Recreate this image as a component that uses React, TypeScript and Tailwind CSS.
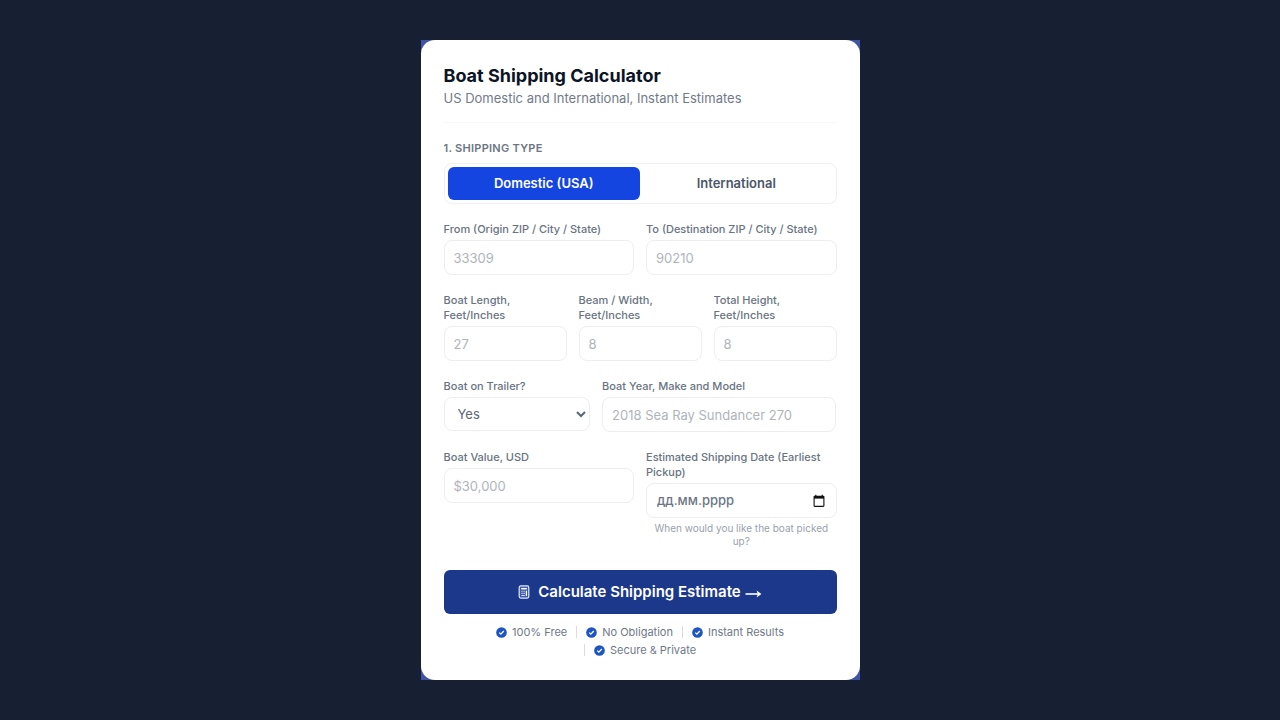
import { useState, type ReactNode } from 'react'

type ShippingType = 'domestic' | 'international'

const TYPES: { id: ShippingType; label: string }[] = [
  { id: 'domestic', label: 'Domestic (USA)' },
  { id: 'international', label: 'International' },
]

const PERKS = ['100% Free', 'No Obligation', 'Instant Results', 'Secure & Private']

const inputClass =
  'block h-[35px] w-full rounded-lg border border-[#eceef0] bg-white px-[9px] text-[13px] text-[#5b6675] outline-none placeholder:text-[#b0b4ba] focus:border-blue-400'

function Field({ id, label, children }: { id: string; label: string; children: ReactNode }) {
  return (
    <div className="min-w-0">
      <label htmlFor={id} className="mb-[3px] block text-[11px] font-medium leading-[15px] text-[#697482]">
        {label}
      </label>
      {children}
    </div>
  )
}

function TextField({ id, label, placeholder }: { id: string; label: string; placeholder: string }) {
  return (
    <Field id={id} label={label}>
      <input id={id} type="text" placeholder={placeholder} className={inputClass} />
    </Field>
  )
}

function CalendarIcon() {
  return (
    <svg viewBox="0 0 12 14" className="h-[14px] w-3" aria-hidden="true">
      <path d="M2.8 0.8v2M9.2 0.8v2" stroke="#111" strokeWidth="1.2" />
      <rect x="1.1" y="2.2" width="9.8" height="10.2" rx="0.6" fill="none" stroke="#111" strokeWidth="1.1" />
      <path d="M1 2h10v2.6H1z" fill="#111" />
    </svg>
  )
}

function CalculatorIcon() {
  return (
    <svg viewBox="0 0 12 14" className="h-[14px] w-3" fill="none" aria-hidden="true">
      <rect x="1.2" y="0.9" width="9.6" height="12.2" rx="1.5" fill="#3d58a8" stroke="#dfe7fa" strokeWidth="1.2" />
      <path d="M3.2 3.7h5.6" stroke="#fff" strokeWidth="1.5" />
      <path d="M3.4 6.3h1.2M5.5 6.3h1.2M3.4 8.4h1.2M5.5 8.4h1.2M3.4 10.5h3.3" stroke="#dfe7fa" strokeWidth="1.1" />
      <path d="M8.4 5.7v5.4" stroke="#fff" strokeWidth="1.2" />
    </svg>
  )
}

function ArrowIcon() {
  return (
    <svg viewBox="0 0 17 10" className="mt-[3px] h-[10px] w-[17px]" fill="none" aria-hidden="true">
      <path d="M0.5 5H14" stroke="#fff" strokeWidth="1.6" />
      <path d="M11.6 1.6 16.4 5l-4.8 3.4L12.8 5z" fill="#fff" />
    </svg>
  )
}

function CheckIcon() {
  return (
    <svg viewBox="0 0 12 12" className="size-[11px] shrink-0" fill="none" aria-hidden="true">
      <circle cx="6" cy="6" r="5.8" fill="#1d55c4" />
      <path d="M3.6 6.1 5.3 7.8 8.5 4.4" stroke="#fff" strokeWidth="1.4" />
    </svg>
  )
}

export default function App() {
  const [type, setType] = useState<ShippingType>('domestic')

  return (
    <main className="flex min-h-screen items-center justify-center bg-[#172033] py-10 font-['Inter','Liberation_Sans',sans-serif]">
      <div className="w-full max-w-[439px] bg-[#4353a3]">
        <form className="rounded-[14px] bg-white px-[23px] pb-[21px] pt-6" onSubmit={(e) => e.preventDefault()}>
          <header className="border-b border-[#f7f8f9] pb-[14px]">
            <h1 className="text-lg font-bold leading-6 text-[#0c1426]">Boat Shipping Calculator</h1>
            <p className="text-[13px] leading-5 text-[#727a89]">US Domestic and International, Instant Estimates</p>
          </header>

          <h2 className="mb-[7px] mt-[17px] text-[11px] font-semibold uppercase leading-4 tracking-wide text-[#6b7583]">
            1. Shipping Type
          </h2>
          <div className="grid h-[41px] grid-cols-2 rounded-lg border border-[#eef0f2] p-[3px]">
            {TYPES.map((t) => (
              <button
                key={t.id}
                type="button"
                aria-pressed={type === t.id}
                onClick={() => setType(t.id)}
                className={`rounded-md text-[13px] font-semibold ${
                  type === t.id ? 'bg-[#1545e0] text-white' : 'text-[#4b5768]'
                }`}
              >
                {t.label}
              </button>
            ))}
          </div>

          <div className="mt-[18px] flex flex-col gap-[18px]">
            <div className="grid grid-cols-2 gap-3">
              <TextField id="from" label="From (Origin ZIP / City / State)" placeholder="33309" />
              <TextField id="to" label="To (Destination ZIP / City / State)" placeholder="90210" />
            </div>

            <div className="grid grid-cols-3 gap-3">
              <TextField id="length" label="Boat Length, Feet/Inches" placeholder="27" />
              <TextField id="beam" label="Beam / Width, Feet/Inches" placeholder="8" />
              <TextField id="height" label="Total Height, Feet/Inches" placeholder="8" />
            </div>

            <div className="grid grid-cols-[5fr_8fr] gap-3">
              <Field id="trailer" label="Boat on Trailer?">
                <select
                  id="trailer"
                  className="block h-[34px] w-full rounded-lg border border-[#eceef0] bg-white pl-[9px] text-[13px] text-[#5b6675]"
                >
                  <option>Yes</option>
                  <option>No</option>
                </select>
              </Field>
              <TextField id="model" label="Boat Year, Make and Model" placeholder="2018 Sea Ray Sundancer 270" />
            </div>

            <div className="grid grid-cols-2 gap-3">
              <TextField id="value" label="Boat Value, USD" placeholder="$30,000" />
              <Field id="date" label="Estimated Shipping Date (Earliest Pickup)">
                <div className="flex h-[35px] items-center rounded-lg border border-[#eceef0] pl-[10px] pr-[11px]">
                  <input
                    id="date"
                    type="text"
                    placeholder="дд.мм.рррр"
                    className="w-full min-w-0 text-[13px] font-medium text-[#5b6675] outline-none placeholder:text-[#6d7785]"
                  />
                  <button type="button" aria-label="Open calendar">
                    <CalendarIcon />
                  </button>
                </div>
                <p className="mt-1 text-center text-[10px] leading-[13px] text-[#9aa1ae]">
                  When would you like the boat picked up?
                </p>
              </Field>
            </div>
          </div>

          <button
            type="submit"
            className="mt-[22px] flex h-11 w-full items-center justify-center rounded-md bg-[#1c388b] text-[15px] font-semibold text-white"
          >
            <CalculatorIcon />
            <span className="ml-2 mr-1">Calculate Shipping Estimate</span>
            <ArrowIcon />
          </button>

          <ul className="mt-[9px] flex flex-wrap justify-center gap-x-[9px] px-10 text-[11px] leading-[18px] text-[#6f7887]">
            {PERKS.map((perk, i) => (
              <li key={perk} className="flex items-center gap-[5px]">
                {i > 0 && <span className="mr-1 h-3 w-px bg-[#d9dce2]" />}
                <CheckIcon />
                {perk}
              </li>
            ))}
          </ul>
        </form>
      </div>
    </main>
  )
}
